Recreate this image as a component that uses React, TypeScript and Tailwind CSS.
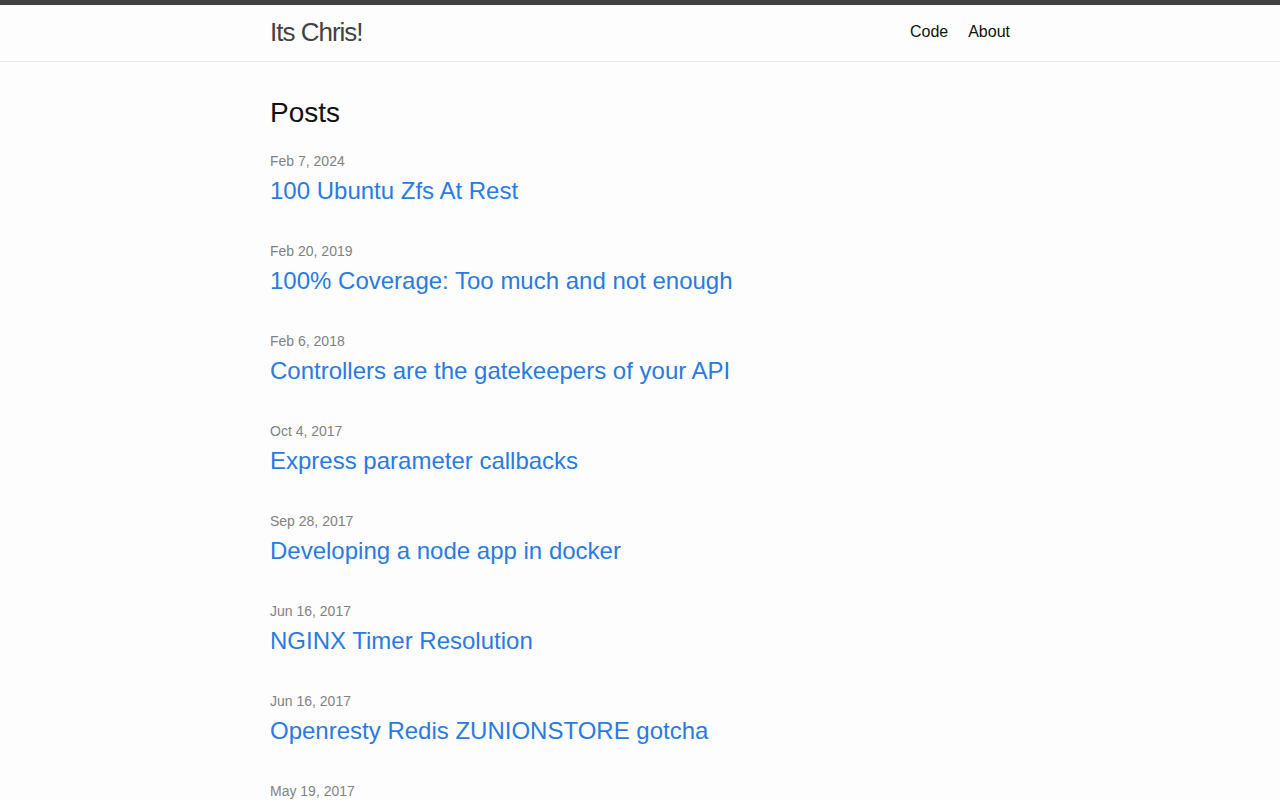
const posts = [
  { date: 'Feb 7, 2024', title: '100 Ubuntu Zfs At Rest' },
  { date: 'Feb 20, 2019', title: '100% Coverage: Too much and not enough' },
  { date: 'Feb 6, 2018', title: 'Controllers are the gatekeepers of your API' },
  { date: 'Oct 4, 2017', title: 'Express parameter callbacks' },
  { date: 'Sep 28, 2017', title: 'Developing a node app in docker' },
  { date: 'Jun 16, 2017', title: 'NGINX Timer Resolution' },
  { date: 'Jun 16, 2017', title: 'Openresty Redis ZUNIONSTORE gotcha' },
  { date: 'May 19, 2017', title: 'Lua and the art of shared dicts' },
];

export default function App() {
  return (
    <div className="min-h-screen bg-[#fdfdfd] text-[#111] font-['Liberation_Sans',Arial,sans-serif]">
      {/* Header */}
      <header className="border-t-[5px] border-t-[#424242] border-b border-b-[#e8e8e8] h-[62px]">
        <div className="max-w-[740px] mx-auto flex items-start justify-between">
          <a href="#" className="text-[26px] leading-[54px] tracking-[-1px] text-[#424242] font-light">
            Its Chris!
          </a>
          <nav className="flex gap-5 text-base leading-[54px] text-[#111]">
            <a href="#">Code</a>
            <a href="#">About</a>
          </nav>
        </div>
      </header>

      {/* Content */}
      <main className="max-w-[740px] mx-auto pt-[30px]">
        <h2 className="text-[28px] leading-[42px] mb-[15px]">Posts</h2>
        <ul>
          {posts.map((p, i) => (
            <li key={i} className="mb-[30px]">
              <div className="text-sm leading-6 text-[#828282]">{p.date}</div>
              <h3 className="text-2xl leading-[36px]">
                <a href="#" className="text-[#2a7ae2]">
                  {p.title}
                </a>
              </h3>
            </li>
          ))}
        </ul>
      </main>
    </div>
  );
}
